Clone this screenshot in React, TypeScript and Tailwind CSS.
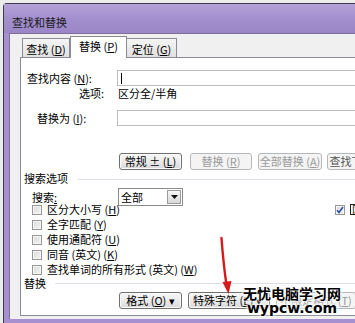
import React from 'react';

const font = "font-['Noto_Sans_CJK_SC','Noto_Sans',sans-serif]";

function Btn({ w, disabled, children, className = '' }: { w: string; disabled?: boolean; children: React.ReactNode; className?: string }) {
  return (
    <div
      className={`${w} ${className} h-[17px] shrink-0 rounded-[3px] border flex items-center justify-center text-[11px] leading-none whitespace-nowrap ${
        disabled
          ? 'border-[#b4b8bb] bg-[#f4f4f4] text-[#9a9a9a]'
          : 'border-[#707070] bg-gradient-to-b from-[#f7f7f7] via-[#ebebeb] to-[#d9d9d9] text-black shadow-[inset_0_0_0_1px_#fbfbfb]'
      }`}
    >
      {children}
    </div>
  );
}

function Box({ checked }: { checked?: boolean }) {
  return (
    <div className="w-[10px] h-[10px] shrink-0 border border-[#979797] bg-gradient-to-br from-[#dcdcdc] to-[#f3f3f3] shadow-[inset_0_0_0_1px_#f6f6f6] flex items-center justify-center">
      {checked && (
        <svg width="8" height="8" viewBox="0 0 8 8">
          <path d="M1 4.2 L3 6.5 L7 1" fill="none" stroke="#2a4fa8" strokeWidth="1.6" />
        </svg>
      )}
    </div>
  );
}

function Check({ label }: { label: React.ReactNode }) {
  return (
    <div className="h-[15px] flex items-center pl-[11px]">
      <Box />
      <span className="ml-[5px] whitespace-nowrap leading-none">{label}</span>
    </div>
  );
}

export default function App() {
  return (
    <div className={`relative w-[355px] h-[323px] overflow-hidden bg-[#ececec] text-[11px] text-black ${font}`}>
      <div className="ml-[3px] mt-[3px] w-[400px] h-[320px] border-t border-l border-[#3f3a4c] rounded-tl-[4px] bg-[#a690cf] flex flex-col">
        {/* title bar */}
        <div className="h-[29px] shrink-0 pl-[8px] pt-[11px] leading-[14px] bg-gradient-to-b from-[#b4a2d9] via-[#a48fce] to-[#9a85c6] text-[#1a1a1a]">
          查找和替换
        </div>

        {/* client */}
        <div className="ml-[5px] h-[286px] shrink-0 bg-[#f0f0f0] border-t border-l border-[#7d6f98] flex flex-col pt-[2px]">
          {/* tabs */}
          <div className="h-[21px] shrink-0 flex items-end pl-[12px]">
            <div className="w-[48px] h-[19px] border border-b-0 border-[#898c95] bg-gradient-to-b from-[#f5f5f5] to-[#e1e1e1] flex items-center justify-center pt-[2px] leading-none">
              查找 (<u>D</u>)
            </div>
            <div className="relative z-10 -mb-px w-[57px] h-[22px] border border-b-0 border-[#898c95] bg-white flex items-center justify-center pb-[2px] leading-none">
              替换 (<u>P</u>)
            </div>
            <div className="w-[50px] h-[19px] border border-b-0 border-l-0 border-[#898c95] bg-gradient-to-b from-[#f5f5f5] to-[#e1e1e1] flex items-center justify-center pt-[2px] leading-none">
              定位 (<u>G</u>)
            </div>
          </div>

          {/* panel */}
          <div className="ml-[10px] mb-[3px] w-[380px] flex-1 border border-[#898c95] bg-white flex flex-col">
            <div className="mt-[12px] h-[16px] flex items-center">
              <div className="w-[96px] pl-[6px] whitespace-nowrap leading-none">查找内容 (<u>N</u>):</div>
              <div className="w-[283px] h-[16px] border border-[#bcbcbc] flex items-center">
                <div className="ml-[3px] w-px h-[11px] bg-black" />
              </div>
            </div>
            <div className="h-[14px] flex items-center">
              <div className="w-[96px] pr-[13px] text-right leading-none">选项:</div>
              <div className="pl-[1px] leading-none">区分全/半角</div>
            </div>
            <div className="mt-[10px] h-[16px] flex items-center">
              <div className="w-[96px] pl-[16px] whitespace-nowrap leading-none">替换为 (<u>I</u>):</div>
              <div className="w-[283px] h-[16px] border border-[#bcbcbc]" />
            </div>

            <div className="mt-[27px] h-[17px] flex">
              <Btn w="w-[63px]" className="ml-[98px]">常规 ± (<u>L</u>)</Btn>
              <Btn w="w-[62px]" className="ml-[8px]" disabled>替换 (<u>R</u>)</Btn>
              <Btn w="w-[64px]" className="ml-[6px]" disabled>全部替换 (<u>A</u>)</Btn>
              <Btn w="w-[76px]" className="ml-[5px] text-[#555]" disabled>
                <span className="text-[#555]">查找下一处 (<u>F</u>)</span>
              </Btn>
            </div>

            <div className="mt-[1px] h-[14px] flex items-center">
              <div className="pl-[3px] leading-none whitespace-nowrap">搜索选项</div>
              <div className="ml-[10px] flex-1 h-px bg-[#d9dfe4] mt-[2px]" />
            </div>

            <div className="mt-[3px] h-[14px] flex items-start">
              <div className="w-[97px] pl-[11px] leading-[14px] pt-[2px]">搜索<u>:</u></div>
              <div className="w-[65px] h-[18px] shrink-0 border border-[#8a8a8a] bg-white flex items-center justify-between">
                <span className="pl-[2px] leading-none">全部</span>
                <div className="mr-px w-[14px] h-[14px] border border-[#9a9a9a] bg-gradient-to-b from-[#f6f6f6] to-[#d8d8d8] flex items-center justify-center">
                  <svg width="7" height="4" viewBox="0 0 7 4">
                    <path d="M0 0 H7 L3.5 4 Z" fill="#111" />
                  </svg>
                </div>
              </div>
            </div>

            <div className="h-[15px] flex items-center pl-[11px]">
              <div className="w-[303px] flex items-center">
                <Box />
                <span className="ml-[5px] whitespace-nowrap leading-none">区分大小写 (<u>H</u>)</span>
              </div>
              <Box checked />
              <div className="ml-[5px] h-[11px] border border-[#222] px-px leading-none text-[10px] flex items-center">区分前缀</div>
            </div>
            <Check label={<>全字匹配 (<u>Y</u>)</>} />
            <Check label={<>使用通配符 (<u>U</u>)</>} />
            <Check label={<>同音 (英文) (<u>K</u>)</>} />
            <Check label={<>查找单词的所有形式 (英文) (<u>W</u>)</>} />

            <div className="h-[13px] flex items-center">
              <div className="pl-[3px] leading-none whitespace-nowrap">替换</div>
              <div className="ml-[9px] flex-1 h-px bg-[#d9dfe4]" />
            </div>

            <div className="mt-[2px] h-[17px] flex">
              <Btn w="w-[63px]" className="ml-[98px]">格式 (<u>O</u>) ▾</Btn>
              <Btn w="w-[82px]" className="ml-[6px] justify-start pl-[4px]">特殊字符 (<u>E</u>) ▾</Btn>
              <Btn w="w-[80px]" className="ml-[6px]" disabled>不限定格式 (<u>T</u>)</Btn>
            </div>
          </div>
        </div>
      </div>

      {/* red annotation arrow */}
      <svg className="absolute left-0 top-0 pointer-events-none" width="355" height="323" viewBox="0 0 355 323">
        <path d="M221.5 238 C222.5 252 224 268 226.5 285" fill="none" stroke="#d41a1a" strokeWidth="2.4" strokeLinecap="round" />
        <path d="M222.5 282 L231.5 281 L228.5 294 Z" fill="#d41a1a" />
      </svg>

      {/* watermark */}
      <div className="absolute left-[243px] top-[285px] flex flex-col items-center pointer-events-none">
        <div className="text-[14px] font-bold leading-[17px] text-black whitespace-nowrap [text-shadow:0_0_2px_#fff,0_0_2px_#fff,0_0_3px_#fff,0_0_4px_#fff]">
          无忧电脑学习网
        </div>
        <div className="font-['DejaVu_Sans',sans-serif] text-[14px] font-bold leading-[12px] text-black whitespace-nowrap [text-shadow:0_0_2px_#fff,0_0_2px_#fff,0_0_3px_#fff,0_0_4px_#fff]">
          wypcw.com
        </div>
      </div>
    </div>
  );
}
